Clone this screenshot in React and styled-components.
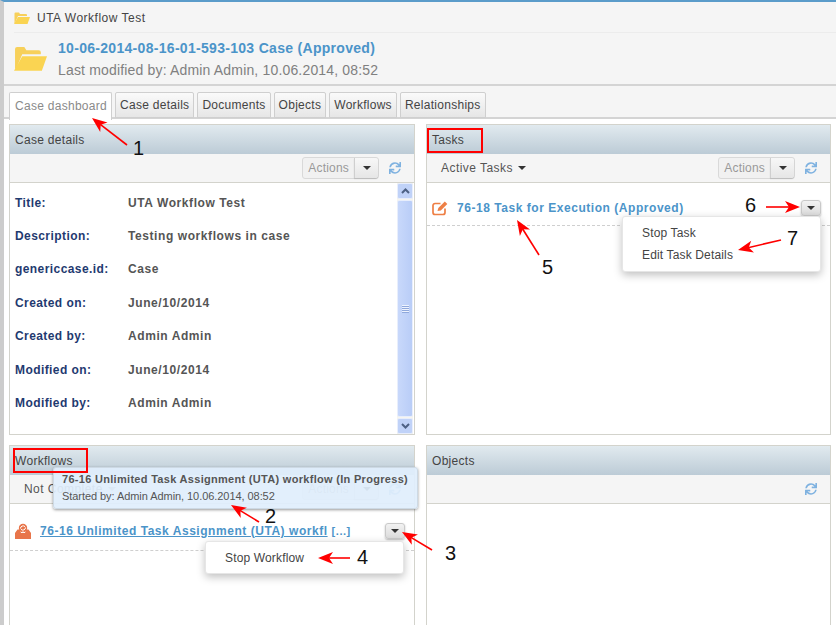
import React from 'react';
import styled, { createGlobalStyle } from 'styled-components';
import { FaSync } from 'react-icons/fa';

const Global = createGlobalStyle`
  html, body {
    margin: 0;
    padding: 0;
    background: #fff;
    overflow: hidden;
  }
  * { box-sizing: border-box; }
`;

const Page = styled.div`
  position: relative;
  width: 836px;
  height: 625px;
  overflow: hidden;
  background: #fff;
  border-left: 4px solid #cccccc;
  border-top: 2px solid #5b9cca;
  font-family: 'Liberation Sans', Arial, sans-serif;
  font-size: 12px;
  color: #555;
`;

const Header = styled.div`
  background: #f5f5f5;
  padding: 0 0 0 10px;
  border-bottom: 2px solid #d4d4d4;
  height: 84px;
`;

const Crumb = styled.div`
  display: flex;
  align-items: center;
  gap: 7px;
  height: 31px;
  padding-top: 2px;
  border-bottom: 1px solid #ececec;
  font-size: 12px;
  letter-spacing: 0.5px;
  color: #444;
`;

const TitleRow = styled.div`
  display: flex;
  align-items: center;
  gap: 11px;
  height: 51px;
`;

const CaseTitle = styled.div`
  font-size: 14px;
  font-weight: bold;
  color: #4b94c9;
  letter-spacing: 0.3px;
`;

const Modified = styled.div`
  margin-top: 6px;
  font-size: 14px;
  color: #808080;
  letter-spacing: 0.17px;
`;

const TabBar = styled.div`
  display: flex;
  gap: 3px;
  height: 33px;
  padding: 6px 0 0 5px;
  background: #f5f5f5;
  border-bottom: 2px solid #d4d4d4;
`;

const Tab = styled.div`
  height: ${p => (p.$active ? '28px' : '26px')};
  padding: 0 4px 0 ${p => (p.$active ? '5px' : '4px')};
  display: flex;
  align-items: center;
  padding-bottom: ${p => (p.$active ? '2px' : '0')};
  border: 1px solid #cfcfcf;
  border-bottom: ${p => (p.$active ? '0' : '1px solid #cfcfcf')};
  border-radius: 2px 2px 0 0;
  background: ${p => (p.$active ? '#fff' : 'linear-gradient(#fafafa, #e6e6e6)')};
  color: ${p => (p.$active ? '#8a8a8a' : '#444')};
  font-size: 12px;
  letter-spacing: 0.28px;
  position: relative;
  z-index: 1;
`;

const Grid = styled.div`
  display: grid;
  grid-template-columns: 406px 405px;
  grid-template-rows: 311px 200px;
  column-gap: 11px;
  row-gap: 10px;
  padding: 5px 0 0 5px;
`;

const Panel = styled.section`
  position: relative;
  border: 1px solid #d3d3cc;
  background: #fff;
  display: flex;
  flex-direction: column;
  min-height: 0;
`;

const PanelHead = styled.div`
  height: 29px;
  flex: none;
  display: flex;
  align-items: center;
  padding-left: 5px;
  background: linear-gradient(#e1eaef, #bccbd6);
  font-size: 12px;
  letter-spacing: 0.3px;
  color: #444;
`;

const Toolbar = styled.div`
  height: 29px;
  flex: none;
  display: flex;
  align-items: center;
  justify-content: flex-end;
  gap: 10px;
  padding: 0 13px 0 14px;
  background: #f5f5f5;
  border-bottom: 1px solid #d3d3cc;
`;

const Filter = styled.div`
  margin-right: auto;
  display: flex;
  align-items: center;
  gap: 5px;
  font-size: 12px;
  letter-spacing: 0.45px;
  color: #555;
`;

const Caret = styled.span`
  width: 0;
  height: 0;
  border-left: 4px solid transparent;
  border-right: 4px solid transparent;
  border-top: 4px solid ${p => p.$color || '#333'};
`;

const Split = styled.div`
  display: flex;
  height: 22px;
  border: 1px solid #d9d9d9;
  border-radius: 3px;
  background: #f1f1f1;
  color: #999;
  font-size: 12px;
`;

const SplitLabel = styled.div`
  display: flex;
  align-items: center;
  padding: 0 5px;
  letter-spacing: 0.2px;
`;

const SplitDrop = styled.div`
  width: 24px;
  display: flex;
  align-items: center;
  justify-content: center;
  background: linear-gradient(#f7f7f7, #e6e6e6);
  border-left: 1px solid #cfcfcf;
  border-radius: 0 3px 3px 0;
  box-shadow: 0 1px 1px #bbb;
`;

const Refresh = styled(FaSync)`
  width: 12px;
  height: 12px;
  color: #7fb2e0;
`;

const DetailsBody = styled.div`
  flex: 1;
  display: flex;
  min-height: 0;
`;

const Details = styled.div`
  flex: 1;
  padding: 3px 5px;
`;

const DetailRow = styled.div`
  display: grid;
  grid-template-columns: 113px 1fr;
  height: 33.4px;
  align-items: center;
  font-size: 12px;
  font-weight: bold;
`;

const DetailLabel = styled.div`
  color: #1f3a70;
  letter-spacing: 0.42px;
`;

const DetailValue = styled.div`
  color: #555;
  letter-spacing: 0.58px;
`;

const Scroll = styled.div`
  width: 16px;
  margin-right: 1px;
  display: flex;
  flex-direction: column;
  background: #f6f5ef;
`;

const ScrollBtn = styled.div`
  height: 16px;
  flex: none;
  display: flex;
  align-items: center;
  justify-content: center;
  border: 1px solid #e8eefc;
  border-radius: 2px;
  background: #c0d2f8;
`;

const ScrollThumb = styled.div`
  flex: 1;
  margin: 1px 0;
  display: flex;
  align-items: center;
  justify-content: center;
  border: 1px solid #e8eefc;
  border-radius: 2px;
  background: linear-gradient(90deg, #c8d8fb, #b9cdf7);
`;

const Grip = styled.div`
  width: 7px;
  height: 8px;
  background: repeating-linear-gradient(#eef3fe 0 1px, #8fa8dc 1px 2px);
`;

const ItemRow = styled.div`
  height: ${p => p.$height}px;
  padding: ${p => p.$top}px 9px 0 5px;
  flex: none;
  display: flex;
  align-items: center;
  gap: 9px;
  border-bottom: 1px dashed #cfcfcf;
`;

const ItemLink = styled.a`
  flex: 1;
  font-size: 12px;
  font-weight: bold;
  letter-spacing: 0.54px;
  color: #4b94c9;
  text-decoration: ${p => (p.$line ? 'underline' : 'none')};
`;

const More = styled.span`
  text-decoration: none;
  display: inline-block;
  margin-left: 4px;
  font-size: 11px;
`;

const RowButton = styled.div`
  width: 20px;
  height: 16px;
  flex: none;
  display: flex;
  align-items: center;
  justify-content: center;
  border: 1px solid #c9c9c9;
  border-radius: 3px;
  background: linear-gradient(#f2f2f2, #dcdcdc);
  box-shadow: 0 1px 2px #bbb;
`;

const Menu = styled.div`
  position: absolute;
  right: ${p => p.$right}px;
  top: ${p => p.$top}px;
  width: 199px;
  padding: 5px 0 ${p => p.$bottom}px 19px;
  background: #fff;
  border: 1px solid #e6e6e6;
  border-radius: 3px;
  box-shadow: 0 3px 8px rgba(0, 0, 0, 0.25);
  z-index: 3;
`;

const MenuItem = styled.div`
  height: 22px;
  display: flex;
  align-items: center;
  font-size: 12px;
  letter-spacing: 0.15px;
  color: #444;
`;

const Tip = styled.div`
  position: absolute;
  left: 43px;
  top: 21px;
  width: 365px;
  height: 42px;
  padding: 4px 8px;
  background: rgba(224, 238, 252, 0.93);
  border: 1px solid #cdd9e4;
  border-radius: 3px;
  box-shadow: 0 1px 3px rgba(0, 0, 0, 0.4);
  font-size: 11px;
  color: #555;
  z-index: 3;
`;

const TipTitle = styled.div`
  font-weight: bold;
  letter-spacing: 0.3px;
  line-height: 15px;
`;

const TipLine = styled.div`
  margin-top: 2px;
  line-height: 14px;
  letter-spacing: -0.06px;
`;

const Overlay = styled.svg`
  position: absolute;
  left: -4px;
  top: -2px;
  width: 836px;
  height: 625px;
  pointer-events: none;
  z-index: 5;
`;

const Note = styled.div`
  position: absolute;
  left: ${p => p.$x - 4}px;
  top: ${p => p.$y - 2}px;
  font-size: 20px;
  line-height: 20px;
  color: #111;
  z-index: 6;
`;

const Grippy = styled.div`
  position: absolute;
  left: -4px;
  top: 453px;
  width: 3px;
  height: 13px;
  background: repeating-linear-gradient(#777 0 1px, #ccc 1px 2px);
`;

const FolderIcon = ({ size }) => (
  <svg width={size} height={size * 0.75} viewBox="0 0 32 24">
    <path d="M1 22V3q0-2 2-2h7l2 3h12q2 0 2 2v2H8L2 22z" fill="#f7d05a" />
    <path d="M8 10h24l-5 14H0z" fill="#fad452" />
  </svg>
);

const WorkflowIcon = () => (
  <svg width="16" height="16" viewBox="0 0 16 16" style={{ flex: 'none' }}>
    <path d="M0 10L2.500 6.500H5L6 10H10L11 6.500H13.500L16 10V16H0z" fill="#e8754a" />
    <circle cx="8" cy="5" r="4.200" fill="#e8754a" />
    <path d="M5.500 5.500a2.600 2.600 0 0 1 4.500-1.800M10.500 4.500a2.600 2.600 0 0 1-4.500 1.800" fill="none" stroke="#fff" strokeWidth="1" />
    <path d="M7 9.500h2L8 8z" fill="#fff" />
  </svg>
);

const EditIcon = () => (
  <svg width="16" height="16" viewBox="0 0 16 16" style={{ flex: 'none' }}>
    <path d="M13 8.500V12.500a2 2 0 0 1-2 2H3a2 2 0 0 1-2-2V5.500a2 2 0 0 1 2-2H8.500" fill="none" stroke="#ee7f45" strokeWidth="1.700" />
    <path d="M5.500 11L6.300 8L12.800 1.500L15.300 4L8.800 10.500z" fill="#ee7f45" />
  </svg>
);

const Chevron = ({ up }) => (
  <svg width="9" height="6" viewBox="0 0 9 6">
    <path d={up ? 'M1 5l3.500-3.500L8 5' : 'M1 1l3.500 3.500L8 1'} fill="none" stroke="#4d6185" strokeWidth="2" />
  </svg>
);

const Arrow = ({ x1, y1, x2, y2 }) => {
  // the head sits at x2,y2 and the tail is a thin line
  const a = Math.atan2(y2 - y1, x2 - x1);
  const px = (d, s) => [x2 - Math.cos(a) * d - Math.sin(a) * s, y2 - Math.sin(a) * d + Math.cos(a) * s].join(',');
  return (
    <g>
      <line x1={x1} y1={y1} x2={x2 - Math.cos(a) * 8} y2={y2 - Math.sin(a) * 8} stroke="#f00" strokeWidth="1.600" />
      <polygon points={`${x2},${y2} ${px(15, 6)} ${px(11, 0)} ${px(15, -6)}`} fill="#f00" />
    </g>
  );
};

const details = [
  ['Title:', 'UTA Workflow Test'],
  ['Description:', 'Testing workflows in case'],
  ['genericcase.id:', 'Case'],
  ['Created on:', 'June/10/2014'],
  ['Created by:', 'Admin Admin'],
  ['Modified on:', 'June/10/2014'],
  ['Modified by:', 'Admin Admin'],
];

const tabs = ['Case dashboard', 'Case details', 'Documents', 'Objects', 'Workflows', 'Relationships'];

const Actions = () => (
  <Split>
    <SplitLabel>Actions</SplitLabel>
    <SplitDrop><Caret /></SplitDrop>
  </Split>
);

const App = () => {
  return (
    <Page>
      <Global />
      <Header>
        <Crumb>
          <FolderIcon size={16} />
          <span>UTA Workflow Test</span>
        </Crumb>
        <TitleRow>
          <FolderIcon size={33} />
          <div>
            <CaseTitle>10-06-2014-08-16-01-593-103 Case (Approved)</CaseTitle>
            <Modified>Last modified by: Admin Admin, 10.06.2014, 08:52</Modified>
          </div>
        </TitleRow>
      </Header>
      <TabBar>
        {tabs.map((t, i) => (
          <Tab key={t} $active={i === 0}>{t}</Tab>
        ))}
      </TabBar>
      <Grid>
        <Panel>
          <PanelHead>Case details</PanelHead>
          <Toolbar>
            <Actions />
            <Refresh />
          </Toolbar>
          <DetailsBody>
            <Details>
              {details.map(([k, v]) => (
                <DetailRow key={k}>
                  <DetailLabel>{k}</DetailLabel>
                  <DetailValue>{v}</DetailValue>
                </DetailRow>
              ))}
            </Details>
            <Scroll>
              <ScrollBtn><Chevron up /></ScrollBtn>
              <ScrollThumb><Grip /></ScrollThumb>
              <ScrollBtn><Chevron /></ScrollBtn>
            </Scroll>
          </DetailsBody>
        </Panel>
        <Panel>
          <PanelHead>Tasks</PanelHead>
          <Toolbar>
            <Filter>Active Tasks <Caret /></Filter>
            <Actions />
            <Refresh />
          </Toolbar>
          <ItemRow $height={43} $top={8}>
            <EditIcon />
            <ItemLink>76-18 Task for Execution (Approved)</ItemLink>
            <RowButton><Caret /></RowButton>
          </ItemRow>
          <Menu $right={9} $top={91} $bottom={5}>
            <MenuItem>Stop Task</MenuItem>
            <MenuItem>Edit Task Details</MenuItem>
          </Menu>
        </Panel>
        <Panel>
          <PanelHead>Workflows</PanelHead>
          <Toolbar>
            <Filter>Not Complete <Caret $color="#999" /></Filter>
            <Actions />
            <Refresh />
          </Toolbar>
          <ItemRow $height={47} $top={7}>
            <WorkflowIcon />
            <ItemLink $line>
              76-16 Unlimited Task Assignment (UTA) workfl
              <More>[...]</More>
            </ItemLink>
            <RowButton><Caret /></RowButton>
          </ItemRow>
          <Tip>
            <TipTitle>76-16 Unlimited Task Assignment (UTA) workflow (In Progress)</TipTitle>
            <TipLine>Started by: Admin Admin, 10.06.2014, 08:52</TipLine>
          </Tip>
          <Menu $right={10} $top={95} $bottom={4}>
            <MenuItem>Stop Workflow</MenuItem>
          </Menu>
        </Panel>
        <Panel>
          <PanelHead>Objects</PanelHead>
          <Toolbar>
            <Refresh />
          </Toolbar>
        </Panel>
      </Grid>
      <Grippy />
      <Overlay viewBox="0 0 836 625">
        <rect x="428" y="129" width="54" height="23" fill="none" stroke="#f00" strokeWidth="2" />
        <rect x="14" y="449" width="73" height="23" fill="none" stroke="#f00" strokeWidth="2" />
        <Arrow x1={127} y1={145} x2={92} y2={118} />
        <Arrow x1={539} y1={255} x2={517} y2={220} />
        <Arrow x1={766} y1={207} x2={800} y2={207} />
        <Arrow x1={781} y1={240} x2={738} y2={250} />
        <Arrow x1={259} y1={522} x2={231} y2={505} />
        <Arrow x1={432} y1={550} x2={402} y2={532} />
        <Arrow x1={350} y1={558} x2={318} y2={558} />
      </Overlay>
      <Note $x={133} $y={138}>1</Note>
      <Note $x={265} $y={506}>2</Note>
      <Note $x={445} $y={543}>3</Note>
      <Note $x={357} $y={547}>4</Note>
      <Note $x={542} $y={257}>5</Note>
      <Note $x={745} $y={195}>6</Note>
      <Note $x={787} $y={228}>7</Note>
    </Page>
  );
};

export default App;
